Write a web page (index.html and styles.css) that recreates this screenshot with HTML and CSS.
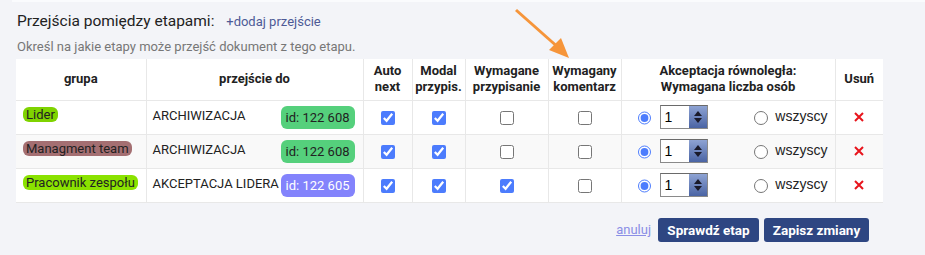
FILE: index.html
```html
<!DOCTYPE html>
<html lang="pl">
<head>
  <meta charset="UTF-8" />
  <title>Przejścia pomiędzy etapami</title>
  <link rel="stylesheet" href="styles.css">
</head>
<body>

<div class="topbar"></div>

<section class="transitions">
  <h2 class="title">Przejścia pomiędzy etapami: <a href="#" class="add-link">+dodaj przejście</a></h2>
  <p class="hint">Określ na jakie etapy może przejść dokument z tego etapu.</p>

  <table class="grid">
    <colgroup>
      <col class="c-group"><col class="c-target"><col class="c-auto"><col class="c-modal">
      <col class="c-assign"><col class="c-comment"><col class="c-accept"><col class="c-del">
    </colgroup>
    <thead>
      <tr>
        <th>grupa</th>
        <th>przejście do</th>
        <th>Auto<br>next</th>
        <th>Modal<br>przypis.</th>
        <th>Wymagane<br>przypisanie</th>
        <th>Wymagany<br>komentarz</th>
        <th>Akceptacja równoległa:<br>Wymagana liczba osób</th>
        <th>Usuń</th>
      </tr>
    </thead>
    <tbody>
      <tr>
        <td><span class="group g-lime">Lider</span></td>
        <td><div class="target"><span class="target-name">ARCHIWIZACJA</span><span class="stage-id id-green">id: 122 608</span></div></td>
        <td class="chk"><input type="checkbox" checked></td>
        <td class="chk"><input type="checkbox" checked></td>
        <td class="chk"><input type="checkbox"></td>
        <td class="chk"><input type="checkbox"></td>
        <td>
          <div class="accept">
            <input type="radio" name="acc1" checked>
            <div class="num"><span class="num-val">1</span><span class="spin"><i class="up"></i><i class="down"></i></span></div>
            <input type="radio" name="acc1" class="all-radio">
            <span class="all-label">wszyscy</span>
          </div>
        </td>
        <td class="del"><svg width="10" height="10" viewBox="0 0 10 10"><path d="M1 1L9 9M9 1L1 9" /></svg></td>
      </tr>
      <tr class="alt">
        <td><span class="group g-rose">Managment team</span></td>
        <td><div class="target"><span class="target-name">ARCHIWIZACJA</span><span class="stage-id id-green">id: 122 608</span></div></td>
        <td class="chk"><input type="checkbox" checked></td>
        <td class="chk"><input type="checkbox" checked></td>
        <td class="chk"><input type="checkbox"></td>
        <td class="chk"><input type="checkbox"></td>
        <td>
          <div class="accept">
            <input type="radio" name="acc2" checked>
            <div class="num"><span class="num-val">1</span><span class="spin"><i class="up"></i><i class="down"></i></span></div>
            <input type="radio" name="acc2" class="all-radio">
            <span class="all-label">wszyscy</span>
          </div>
        </td>
        <td class="del"><svg width="10" height="10" viewBox="0 0 10 10"><path d="M1 1L9 9M9 1L1 9" /></svg></td>
      </tr>
      <tr>
        <td><span class="group g-lime2">Pracownik zespołu</span></td>
        <td><div class="target"><span class="target-name">AKCEPTACJA LIDERA</span><span class="stage-id id-violet">id: 122 605</span></div></td>
        <td class="chk"><input type="checkbox" checked></td>
        <td class="chk"><input type="checkbox" checked></td>
        <td class="chk"><input type="checkbox" checked></td>
        <td class="chk"><input type="checkbox"></td>
        <td>
          <div class="accept">
            <input type="radio" name="acc3" checked>
            <div class="num"><span class="num-val">1</span><span class="spin"><i class="up"></i><i class="down"></i></span></div>
            <input type="radio" name="acc3" class="all-radio">
            <span class="all-label">wszyscy</span>
          </div>
        </td>
        <td class="del"><svg width="10" height="10" viewBox="0 0 10 10"><path d="M1 1L9 9M9 1L1 9" /></svg></td>
      </tr>
    </tbody>
  </table>

  <div class="actions">
    <a href="#" class="cancel">anuluj</a>
    <button class="btn btn-check">Sprawdź etap</button>
    <button class="btn btn-save">Zapisz zmiany</button>
  </div>
</section>

<!-- annotation arrow -->
<svg class="arrow" width="70" height="64" viewBox="0 0 70 64">
  <line x1="6" y1="6" x2="50" y2="45" />
  <polygon points="59,54 39,46 51,34" />
</svg>

</body>
</html>
```

FILE: styles.css
```css
body {
  margin: 0;
  font-family: Roboto, "Noto Sans", sans-serif;
  background: #f3f4f8;
  color: #222;
  position: relative;
}
.topbar {
  height: 2px;
  margin-left: 12px;
  background: #fafbfd;
}
.transitions {
  padding: 0 16px;
}
.title {
  margin: 8px 0 0 1px;
  font-size: 15.5px;
  font-weight: normal;
  line-height: 22px;
  color: #222;
}
.add-link {
  margin-left: 8px;
  font-size: 13px;
  color: #4d5a96;
  text-decoration: none;
}
.hint {
  margin: 5px 0 3px 1px;
  font-size: 13px;
  line-height: 18px;
  color: #777;
}

/* table */
.grid {
  border-collapse: collapse;
  table-layout: fixed;
  width: 867px;
  background: #fff;
}
.c-group { width: 130px; }
.c-target { width: 217px; }
.c-auto { width: 49px; }
.c-modal { width: 53px; }
.c-assign { width: 83px; }
.c-comment { width: 73px; }
.c-accept { width: 214px; }
.c-del { width: 48px; }

.grid th, .grid td {
  border: 1px solid #e8e8e8;
  box-sizing: border-box;
}
.grid tr > :first-child { border-left: none; }
.grid tr > :last-child { border-right: none; }
.grid thead th { border-top: none; }
.grid thead tr { height: 41px; }
.grid tbody tr { height: 34px; }
.grid th {
  padding: 0 1px;
  font-size: 13px;
  font-weight: bold;
  line-height: 16px;
  color: #222;
  text-align: center;
}
.grid td {
  padding: 0 7px;
  font-size: 13px;
  line-height: 15px;
  vertical-align: top;
}
.grid tr.alt td {
  background: #f9f9f9;
}
.group {
  display: inline-block;
  margin-top: 6px;
  padding: 0 3px;
  line-height: 15px;
  border-radius: 6px;
  color: #222;
}
.g-lime { background: #7fd300; }
.g-rose { background: #a46f72; }
.g-lime2 { background: #8ae200; }
.target {
  display: flex;
  justify-content: space-between;
  align-items: flex-start;
  padding-top: 5px;
  margin: 0 1px 0 -1px;
}
.target-name {
  padding-top: 2px;
  white-space: nowrap;
}
.stage-id {
  padding: 4px 5px;
  line-height: 15px;
  border-radius: 6px;
  white-space: nowrap;
  color: #222;
}
.id-green { background: #55d07c; }
.id-violet { background: #8383fc; color: #fff; }

.grid td.chk {
  text-align: center;
  vertical-align: middle;
  padding: 0;
}
.chk input {
  display: block;
  width: 14px;
  height: 14px;
  margin: 1px auto 0;
  accent-color: #4c7cfd;
}

/* parallel acceptance */
.accept {
  display: flex;
  align-items: flex-start;
  padding: 4px 0 0 9px;
}
.accept input[type="radio"] {
  width: 14px;
  height: 14px;
  margin: 6px 9px 0 0;
  accent-color: #4c7cfd;
}
.accept input.all-radio {
  margin: 6px 7px 0 46px;
}
.num {
  display: flex;
  width: 48px;
  height: 24px;
  box-sizing: border-box;
  border: 1px solid #8a8a8a;
  border-top-color: #6a6a6a;
  background: #fff;
}
.num-val {
  flex: 1;
  padding-left: 3px;
  font-family: "Liberation Sans", Arial, sans-serif;
  font-size: 14px;
  line-height: 22px;
  color: #000;
}
.spin {
  width: 18px;
  display: flex;
  flex-direction: column;
  align-items: center;
  justify-content: center;
  gap: 2px;
  background: linear-gradient(#8ea3d3, #4a64a4);
}
.spin i {
  width: 0;
  height: 0;
  border-left: 4px solid transparent;
  border-right: 4px solid transparent;
}
.spin .up { border-bottom: 5px solid #1a1a2a; }
.spin .down { border-top: 5px solid #1a1a2a; }
.all-label {
  padding-top: 3px;
  font-family: "Liberation Sans", Arial, sans-serif;
  font-size: 14px;
  line-height: 16px;
  color: #222;
}
.grid td.del {
  text-align: center;
  vertical-align: middle;
  padding: 0;
}
.del svg {
  display: block;
  margin: 0 auto;
}
.del svg path {
  stroke: #e8141c;
  stroke-width: 2;
}

/* buttons */
.actions {
  display: flex;
  justify-content: flex-end;
  align-items: center;
  gap: 5px;
  width: 853px;
  margin-top: 15px;
}
.cancel {
  margin-right: 2px;
  font-size: 13px;
  color: #8a8ee6;
}
.btn {
  height: 24px;
  margin: 0;
  padding: 0;
  border: none;
  border-radius: 3px;
  background: #2e4682;
  color: #fff;
  font-family: Roboto, sans-serif;
  font-size: 13.5px;
  font-weight: bold;
  text-align: center;
}
.btn-check { width: 101px; }
.btn-save { width: 105px; }

.arrow {
  position: absolute;
  left: 510px;
  top: 4px;
}
.arrow line {
  stroke: #f6953a;
  stroke-width: 3;
}
.arrow polygon {
  fill: #f6953a;
}
```
